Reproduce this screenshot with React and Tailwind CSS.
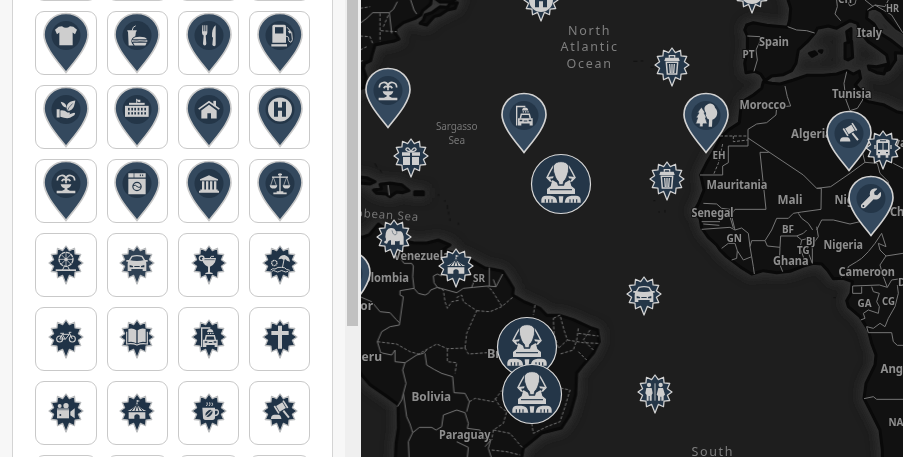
import React from "react";
import { FaWrench } from "react-icons/fa";

const L = "#cecece";
const D = "#243648";

// Glyphs are drawn around (0,0) in third-of-a-pixel units.
const line = (d, w = 4, c = L) => <path d={d} fill="none" stroke={c} strokeWidth={w} />;
const fill = (d, c = L) => <path d={d} fill={c} />;
const box = (x, y, w, h, c = L) => <rect x={x} y={y} width={w} height={h} fill={c} />;

const car = (
  <>
    {line("M-23,-7 L-15,-20 Q0,-24 15,-20 L23,-7", 4)}
    {fill("M-32,-9 H-23 Q0,-3 23,-9 H32 V-4 H27 L28,2 V24 H17 V18 H-17 V24 H-28 V2 L-27,-4 H-32Z")}
    {fill("M-22,6 L-12,9 V13 H-22Z M22,6 L12,9 V13 H22Z M-8,9 H8 V12 H-8Z", D)}
  </>
);

const gavel = (
  <>
    <g transform="translate(3,-12) rotate(-32)">
      {box(-11, -10, 22, 20)}
      {box(-18, -13, 5, 26)}
      {box(13, -13, 5, 26)}
    </g>
    {line("M10,-1 L27,20", 6)}
    {fill("M-27,22 Q-26,11 -17,11 H-5 Q2,11 4,22 V24 H-27Z")}
  </>
);

const ICONS = {
  shirt: fill("M-12,-28 Q0,-18 12,-28 L22,-26 L33,-17 L27,-4 L20,-9 V29 H-20 V-9 L-27,-4 L-33,-17 L-22,-26Z"),
  food: (
    <>
      {line("M-15,-14 L-11,-25 L-4,-29", 3)}
      {fill("M-29,-16 H-1 V-12 H-3 L-5,2 Q-18,7 -17,18 L-15,24 L-10,30 H-25 L-27,-12 H-29Z")}
      {fill("M-13,11 Q-8,4 8,4 Q25,4 30,11Z M-15,14 H31 V19 H-15Z M-12,22 H29 L25,30 H-7Z")}
      {line("M-11,17 L0,16 L8,18 L26,16", 1.6, D)}
    </>
  ),
  cutlery: fill(
    "M-20,-31 h3 v18 h3 v-18 h3 v18 h3 v-18 h3 v23 q0,6 -5,8 l2,24 q0,6 -5,6 q-5,0 -5,-6 l2,-24 q-5,-2 -5,-8z M20,-31 Q8,-22 9,4 L12,7 L10,28 Q11,32 16,32 Q21,31 20,27Z"
  ),
  gas: (
    <>
      {fill("M-23,-27 q0,-5 5,-5 H13 q5,0 5,5 V22 H-23Z")}
      {box(-15, -25, 25, 19, D)}
      {box(-26, 26, 47, 7)}
      {line("M21,-25 L35,-9 L37,12 Q36,21 30,20 Q25,18 26,8 Q25,2 18,2", 3)}
      {line("M26,-14 L32,-7", 6)}
    </>
  ),
  plant: (
    <>
      {fill("M28,-27 Q10,-25 4,-15 Q-1,-7 3,4 Q19,4 24,-10 Q27,-20 28,-27Z M-16,-23 Q2,-20 1,-6 Q-10,-5 -16,-23Z")}
      {line("M20,-18 Q7,-6 3,5", 2, D)}
      {fill("M-28,-1 H-19 V24 H-28Z M-17,3 Q-5,1 4,9 H11 Q14,13 8,15 L24,10 Q30,10 25,17 L12,25 Q0,28 -17,22Z")}
    </>
  ),
  school: (
    <>
      {box(-36, -11, 71, 33)}
      {box(-24, -20, 47, 6)}
      {line("M-1,-20 V-32", 3)}
      {fill("M-2,-32 L2,-29 L10,-29 V-22 L2,-23Z")}
      {[-27, -17, -8, 2, 12, 22].map((x) => (
        <g key={x}>
          {box(x, -5, 5, 8, D)}
          {box(x, 8, 5, 7, D)}
        </g>
      ))}
    </>
  ),
  house: (
    <>
      {line("M-31,-1 L0,-23 L31,-1", 5)}
      {box(13, -26, 8, 16)}
      {fill("M-23,3 L0,-14 L23,3 V27 H6 V11 H-5 V27 H-23Z")}
    </>
  ),
  hospital: (
    <>
      <circle r="36" fill={L} />
      {fill("M-18,-23h12v17h12v-17h12v45h-12v-18h-12v18h-12z", D)}
    </>
  ),
  fountain: (
    <>
      {fill("M-28,22 H28 V29 H-28Z M-16,2 H16 Q14,12 4,14 V18 L12,22 H-12 L-4,18 V14 Q-14,12 -16,2Z")}
      {line("M0,-1 V-22 M0,-14 Q-3,-26 -14,-24 Q-26,-22 -26,-9 M0,-14 Q3,-26 14,-24 Q26,-22 26,-9 M0,-8 Q-6,-17 -13,-7 M0,-8 Q6,-17 13,-7", 5)}
    </>
  ),
  washer: (
    <>
      {fill("M-26,-31 H-10 V-18 H-26Z M-8,-31 H26 V-18 H-8Z M-26,-14 H26 V32 H-26Z")}
      {line("M10,-27 V-22 M17,-27 V-22", 3, D)}
      <circle cy="9" r="12.5" fill="none" stroke={D} strokeWidth="3.5" />
      {line("M-12,6 Q-4,3 0,9 Q5,14 12,10", 3, D)}
    </>
  ),
  bank: fill(
    "M0,-25 L27,-13 V-9 H-27 V-13Z M-21,-7 h7 v25 h-7z M-9,-7 h7 v25 h-7z M3,-7 h7 v25 h-7z M15,-7 h7 v25 h-7z M-26,18 H26 V22 H30 V28 H-30 V22 H-26Z"
  ),
  scales: (
    <>
      {line("M0,-31 V26 M-6,-27 H6", 4)}
      {line("M-24,-19 H24", 4)}
      {line("M-20,-19 L-28,6 M-20,-19 L-11,6 M20,-19 L28,6 M20,-19 L11,6", 2)}
      {fill("M-31,5 h23 q-1,10 -11,10 q-11,0 -12,-10z M31,5 h-23 q1,10 11,10 q11,0 12,-10z M-10,23 H10 V27 H20 V32 H-20 V27 H-10Z")}
    </>
  ),
  ferris: (
    <>
      <circle cy="-11" r="21" fill="none" stroke={L} strokeWidth="4" strokeDasharray="12 2" />
      {line("M0,-32 V10 M-21,-11 H21 M-15,-26 L15,4 M15,-26 L-15,4", 2.4)}
      <circle cy="-11" r="5" fill={L} />
      {line("M-5,10 L-11,22 M5,10 L11,22", 3)}
      {box(-31, 19, 61, 5)}
    </>
  ),
  car,
  cocktail: (
    <>
      {fill("M-21,-15 H21 L18,-2 Q12,9 3,11 V28 L11,30 V33 H-11 V30 L-3,28 V11 Q-12,9 -18,-2Z")}
      {line("M-17,-10 H17", 2, D)}
      {line("M3,-14 L7,-20 H15", 3)}
      <circle cx="-22" cy="-14" r="7" fill="none" stroke={L} strokeWidth="4" />
    </>
  ),
  beach: (
    <>
      <circle cx="-17" cy="0" r="8" fill="none" stroke={L} strokeWidth="4" strokeDasharray="4 1.3" />
      {fill("M-5,-11 Q0,-24 14,-24 Q28,-20 30,-4 L21,-7 L17,-11 L11,-9 L5,-13Z")}
      {line("M12,-10 L7,15", 3)}
      {line("M-28,21 Q-22,15 -15,18 Q-7,11 5,13 Q16,13 19,19 L29,22 M-25,25 q6,-5 12,0 q6,4 12,0 q6,-5 12,0 q6,4 13,0", 3)}
    </>
  ),
  bike: (
    <>
      <circle cx="-19" cy="6" r="9" fill="none" stroke={L} strokeWidth="3.4" />
      <circle cx="19" cy="6" r="9" fill="none" stroke={L} strokeWidth="3.4" />
      {line("M-19,6 L-11,-8 H10 L-2,7 L-11,-8 M-19,6 H-2 M19,6 L9,-14 H16 M-17,-11 H-6", 3)}
    </>
  ),
  book: (
    <>
      {fill("M-2,-20 Q-12,-28 -26,-24 V15 Q-12,12 -2,19Z M2,-20 Q12,-28 26,-24 V15 Q12,12 2,19Z")}
      {line("M-31,-16 V21 Q-13,18 0,24 Q13,18 31,21 V-16", 3.5)}
    </>
  ),
  carwash: (
    <>
      {line("M-22,30 V-27 H4", 4)}
      {fill("M-6,-15 Q-5,-24 3,-24 Q12,-24 13,-15Z M-4,-13 h4 v4 h-4z M3,-13 h4 v4 h-4z M10,-13 h4 v4 h-4z")}
      {line("M-11,9 L-8,-4 H16 L19,9", 4.5)}
      {fill("M-18,8 H26 V30 H17 V24 H-8 V30 H-18Z")}
      {fill("M-13,13 h8 v4 h-8z M14,13 h8 v4 h-8z M-1,15 h11 v3 h-11z", D)}
    </>
  ),
  cross: fill("M-6,-34 H6 V-18 H26 V-6 H6 V35 H-6 V-6 H-26 V-18 H-6Z"),
  camera: (
    <>
      <circle cx="-19" cy="-15" r="6" fill={L} />
      <circle cx="0" cy="-16" r="8" fill={L} />
      {box(-27, -7, 36, 29)}
      {box(-27, -7, 36, 5, "#8d949b")}
      <circle cx="-17" cy="12" r="3" fill={D} />
      {fill("M13,2 L26,-8 V22 L13,13Z")}
    </>
  ),
  tent: (
    <>
      {fill("M-28,0 Q-8,-8 0,-25 Q8,-8 28,0Z M-25,4 H25 V23 H8 V14 Q0,6 -8,14 V23 H-25Z M0,-33 L9,-30 L0,-27Z")}
      {line("M-2,-20 L-17,0 M0,-20 L-6,0 M0,-20 L6,0 M2,-20 L17,0", 3, D)}
      {line("M0,-33 V-22", 2)}
    </>
  ),
  coffee: (
    <>
      {line("M-8,-15 Q-3,-19 -6,-26 M0,-15 Q5,-19 2,-26 M8,-15 Q13,-19 9,-25", 3)}
      {fill("M-20,-10 H18 V19 Q18,27 10,27 H-10 Q-18,27 -18,19Z")}
      {line("M17,-3 H25 Q29,-1 28,6 Q26,13 17,14", 4)}
      <g transform="translate(0,7) rotate(45)">
        <ellipse rx="8" ry="12" fill={D} />
        {line("M0,-12 V12", 3)}
      </g>
    </>
  ),
  gavel,
  trash: (
    <>
      {line("M-8,-22 V-28 H8 V-22", 4)}
      {fill("M-20,-22 H20 L23,-12 H-23Z")}
      {line("M-17,-8 L-14,27 H14 L17,-8Z", 4.5)}
      {line("M-7,-3 L-5,24 M0,-3 V24 M7,-3 L5,24", 4)}
    </>
  ),
  gift: (
    <>
      {fill("M-27,-11 H-3 V-1 H-27Z M3,-11 H27 V-1 H3Z M-24,3 H-3 V27 H-24Z M3,3 H24 V27 H3Z")}
      {line("M0,-12 Q-6,-28 -14,-23 Q-20,-15 0,-12 Q6,-28 14,-23 Q20,-15 0,-12", 4)}
    </>
  ),
  elephant: (
    <>
      {fill("M-26,0 Q-26,-25 -10,-27 Q2,-28 6,-17 H21 Q29,-12 29,-1 V23 H17 V11 Q10,14 3,12 V23 H-9 V10 Q-16,8 -18,14 L-21,20 L-29,18 V13 Q-23,13 -24,6Z")}
      {line("M-6,-20 Q-3,-4 6,-7 Q10,-10 8,-17", 2, "#55626e")}
    </>
  ),
  restroom: (
    <>
      <circle cx="-18" cy="-21" r="6.5" fill={L} />
      <circle cx="17" cy="-21" r="6.5" fill={L} />
      {box(-2, -26, 4, 52, "#8f98a0")}
      {fill("M-26,-12 H-10 L-7,4 L-10,9 V26 H-16 V12 H-19 V26 H-25 V9 L-29,4Z M10,-12 H24 L30,8 L26,12 V26 H19 V14 H16 V26 H9 V12 L5,8Z")}
    </>
  ),
  bus: (
    <>
      {fill("M-20,-22 Q-18,-27 0,-27 Q18,-27 20,-22 V22 H16 V29 H8 V22 H-8 V29 H-16 V22 H-20Z M-26,-9 h4 v12 h-4z M22,-9 h4 v12 h-4z")}
      {fill("M-15,-15 H-1.5 V5 H-15Z M1.5,-15 H15 V5 H1.5Z M-9,-23 H9 V-20 H-9Z M-15,12 h6 v4 h-6z M9,12 h6 v4 h-6z", D)}
    </>
  ),
  tree: (
    <>
      {fill("M13,-36 Q26,-34 27,-23 Q36,-14 33,-2 Q30,9 19,13 L18,34 H8 L9,12 Q4,11 2,7 L-2,-2 L1,-4 L-4,-16 Q-7,-27 3,-32 Q8,-36 13,-36Z")}
      <path
        d="M-14,-25 L-2,-8 H-6 L2,7 H-2 L4,25 H-9 V34 H-19 V25 H-31 L-25,7 H-30 L-21,-8 H-26Z"
        fill={L}
        stroke={D}
        strokeWidth="2"
      />
    </>
  ),
  wrench: (
    <g transform="translate(-30.5,-31)">
      <FaWrench size={61} color={L} />
    </g>
  ),
};

const burst = (() => {
  const pts = [];
  for (let i = 0; i < 24; i++) {
    const r = i === 12 ? 63 : i % 2 ? 38.5 : 51;
    const a = (i * Math.PI) / 12;
    pts.push(`${(Math.sin(a) * r).toFixed(1)},${(-Math.cos(a) * r).toFixed(1)}`);
  }
  return "M" + pts.join("L") + "Z";
})();

const PIN = "M0,-66 C37,-66 66,-38 66,-2 C66,34 24,80 0,111 C-24,80 -66,34 -66,-2 C-66,-38 -37,-66 0,-66Z";

function Pin({ icon, edge = "#d2d2d2", className = "" }) {
  return (
    <svg className={`block h-[62px] w-[48px] shrink-0 ${className}`} viewBox="-72 -70.5 144 186">
      <path d={PIN} fill="#34495e" stroke={edge} strokeWidth="5" />
      <circle r="43.5" fill={D} />
      {ICONS[icon]}
    </svg>
  );
}

function Burst({ icon, edge = "#d2d2d2", body = D, className = "" }) {
  return (
    <svg className={`block h-[42px] w-[38px] shrink-0 ${className}`} viewBox="-57 -57 114 126">
      <path d={burst} fill={body} stroke={edge} strokeWidth="3.8" strokeLinejoin="round" />
      {ICONS[icon]}
    </svg>
  );
}

function Sphinx({ className = "" }) {
  const half = (
    <>
      {line("M-22,-55 Q-30,-44 -42,-19 L-31,-8", 4.5)}
      {fill("M-41,-21 L-22,-23 L-24,-17 L-33,-16 L-26,-5 L-34,-8Z")}
      {fill("M-59,56 V47 Q-58,35 -45,35 H-32 Q-16,36 -13,48 L-11,56Z")}
      {line("M-47,56 V46 M-37,56 V46 M-27,56 V46", 3.5, D)}
    </>
  );
  return (
    <svg className={`block size-[62px] ${className}`} viewBox="-93 -93 186 186">
      <circle r="88.5" fill={D} stroke="#d8d8d8" strokeWidth="3.6" />
      {half}
      <g transform="scale(-1,1)">{half}</g>
      {fill("M-26,-12 L-12,-4 L-9,5 H9 L12,-4 L26,-12 L31,6 L42,15 V30 H-42 V15 L-31,6Z")}
      <path
        d="M0,-67 Q18,-67 23,-54 Q24,-36 17,-21 Q14,-13 8,-8 L6,2 H-6 L-8,-8 Q-14,-13 -17,-21 Q-24,-36 -23,-54 Q-18,-67 0,-67Z"
        fill={L}
        stroke={D}
        strokeWidth="2.5"
      />
      {line("M-33,17 H33", 3.5, D)}
      {fill("M-7,37 H7 L5,56 H-5Z")}
    </svg>
  );
}

const TILES = [
  null, null, null, null,
  "shirt", "food", "cutlery", "gas",
  "plant", "school", "house", "hospital",
  "fountain", "washer", "bank", "scales",
  "ferris", "car", "cocktail", "beach",
  "bike", "book", "carwash", "cross",
  "camera", "tent", "coffee", "gavel",
  null, null, null, null,
];

function Palette() {
  return (
    <aside className="flex h-full w-[361px] shrink-0 bg-[#f7f7f7]">
      <div className="ml-3 flex h-full w-[321px] items-end overflow-hidden border-x border-[#d4d4d4] bg-white pl-[22.3px]">
        <div className="-mb-[62px] grid w-[275.2px] grid-cols-4 gap-[10px]">
          {TILES.map((icon, i) => (
            <button
              key={i}
              className="flex h-16 items-center justify-center rounded-[9px] border border-[#c9c9c9] bg-white"
            >
              {icon && i < 16 && <Pin icon={icon} edge="#c9c9c9" />}
              {icon && i >= 16 && (
                <Burst icon={icon} edge="#b9bbbd" body={icon === "car" ? "#2f4154" : "#203347"} />
              )}
            </button>
          ))}
        </div>
      </div>
      <div className="ml-3 flex h-full w-4 bg-[#efefef] pl-[2px]">
        <div className="h-[326px] w-[11px] bg-[#c1c1c1]" />
      </div>
    </aside>
  );
}

// Coast lines: west half starts at x=360, east half at x=620, three units per pixel.
const WEST = [
  "M-20,-10 H215 L212,12 L188,32 L182,45 L165,55 L130,68 L108,85 L106,100 L117,117 L100,124 L75,128 L45,135 L36,165 L32,182 L14,190 L10,205 L18,230 L12,262 L-20,275Z",
  "M180,70 L190,60 L195,45 L215,38 L240,20 L262,22 L270,10 L292,8 L285,25 L262,30 L240,45 L222,50 L200,75Z",
  "M225,-5 L290,-5 L275,6 L240,6Z",
  "M-10,530 L20,533 L45,545 L30,552 L-10,548Z",
  "M40,570 L64,566 L60,553 L90,549 L125,554 L147,572 L128,578 L110,576 L90,590 L78,582 L50,580Z",
  "M164,575 H190 V584 H164Z",
  "M-20,700 L5,712 L28,704 L55,672 L80,690 L95,705 L120,720 L160,728 L200,729 L235,720 L270,735 L248,750 L300,764 L340,784 L375,804 L400,808 L428,814 L445,840 L460,865 L458,885 L490,904 L520,916 L540,925 L560,946 L600,946 L640,959 L690,982 L713,990 L717,1025 L700,1059 L670,1094 L650,1119 L647,1184 L630,1244 L604,1284 L545,1299 L515,1324 L490,1344 L482,1390 L105,1390 L108,1330 L115,1284 L114,1214 L80,1189 L30,1154 L5,1125 L-20,1090Z",
];
const EAST = [
  "M430,245 L455,250 L480,252 L520,240 L560,226 L610,226 L650,222 L680,212 L700,222 L718,213 L722,235 L706,255 L725,275 L722,295 L745,305 L790,314 L830,335 L880,345 V1400 H788 L787,1350 L780,1290 L755,1240 L732,1195 L738,1150 L765,1095 L768,1065 L755,1030 L745,990 L720,950 L685,920 L680,902 L693,880 L697,845 L670,835 L640,836 L622,810 L605,792 L580,790 L550,798 L510,814 L470,818 L430,812 L395,822 L360,800 L320,770 L300,750 L290,735 L265,712 L245,684 L240,655 L222,635 L236,610 L252,570 L242,525 L262,485 L280,455 L300,415 L325,390 L358,368 L362,330 L375,300 L400,285 L425,265Z",
  "M380,75 L400,68 L440,76 L503,82 L509,60 L512,25 L498,-20 H890 V108 L860,104 L830,85 L800,55 L785,35 L762,22 L742,32 L740,55 L762,72 L778,98 L812,120 L848,148 L846,160 L826,158 L827,180 L808,208 L800,212 L806,192 L800,165 L780,150 L745,125 L722,98 L712,70 L690,62 L665,76 L650,85 L625,78 L592,85 L584,100 L562,125 L535,150 L528,190 L515,212 L490,224 L455,228 L435,242 L422,222 L405,214 L378,218 L374,190 L382,150 L382,108 L374,90Z",
  "M745,198 L770,200 L802,193 L792,222 L770,218 L748,208Z",
  "M675,130 L695,124 L698,172 L684,180 L675,176Z",
  "M680,95 L693,86 L693,118 L684,124Z",
  "M568,160 L584,155 L590,162 L576,169Z M598,153 L606,152 L604,157Z",
];
const W_SOLID = [
  "M20,55 L38,38 H88 L100,28 L112,5 M88,38 L95,100 M152,0 L162,30 L170,42 M0,70 L20,55 M84,555 L88,586",
  "M115,735 L125,780 L132,790 H155 L160,798 L158,830 L162,865 L175,880 L195,885 L205,880 L212,870 L232,862 L222,848 L220,828 L232,822 L245,828",
  "M232,862 L290,878 L310,865 L340,862 L382,858 L408,860 L428,822 M388,803 L388,858 M408,860 L400,838 M335,862 L345,836",
  "M162,865 L120,872 V885 L130,890 L118,975 L90,980 L65,995 L52,1025 L62,1058 L95,1065 L105,1050 V1085 L135,1088 L170,1065 L190,1060 L200,1050",
  "M0,890 L35,905 L60,935 L90,938 L108,958 L118,968 M135,1088 L128,1110 L138,1150 L130,1180 L125,1200 L112,1220 M130,1180 L140,1250 L150,1272 L158,1298 L178,1282 L215,1282 L228,1290 L245,1280 L250,1245 L290,1230 L315,1238 L325,1270 L322,1285 L360,1290 L365,1312 L392,1320 L385,1345 L400,1390",
  "M195,1060 L200,1095 L222,1108 L245,1120 L278,1130 L282,1178 L315,1180 L328,1205 L320,1235 M158,1298 L145,1325 L148,1390 M290,1325 L325,1342 L320,1390 M392,1320 L375,1340",
];
const W_DASH = [
  "M0,25 L30,20 M0,108 L30,110 L38,130 M60,40 V125 M62,92 L110,95 M70,80 L85,45 M0,150 L20,140 M0,185 L12,180",
  "M52,1025 L110,1032 L150,1055 L175,1062 L230,1032 L262,1046 L315,1044 L325,1062 L380,1058 L420,1060",
  "M315,1044 L320,1000 L350,932 L310,905 L305,885 L285,895 M350,932 L390,935 L425,920 L460,890 M425,918 L395,870 L382,860",
  "M232,862 L250,870 L255,905 L262,925 L275,905 L300,900 M262,1046 V1085 L290,1088 L285,1120 M525,915 L520,945 M580,955 L600,945 L612,990 L622,1020 L595,1045 L582,1000Z M622,1020 L670,1028 L715,1030 M655,985 L650,1020 L640,1050 L600,1062 M690,990 L670,1020 L700,1050 M655,1000 L715,1008 M655,1055 L680,1080",
  "M328,1205 L345,1195 L400,1205 L430,1165 M405,1195 L420,1220 L440,1235 L430,1270 L400,1290 L395,1320 M400,1290 L450,1300 L480,1335 L490,1345 M515,1270 L520,1300 L560,1280 L600,1265 L615,1220 L630,1170 L605,1165 M395,1350 L440,1355 L480,1365",
];
const E_SOLID = [
  "M382,108 L420,110 L418,128 L408,150 L412,180 L402,214 M503,80 L530,90 L560,92 L584,99 M650,0 L652,20 L645,42 L662,62 M680,0 L690,18 L705,12 L708,0 M742,30 L765,15 L795,20 L805,0 M765,15 L790,30 L815,45 L848,98 M735,0 L760,20",
  "M495,258 L502,290 L512,318 L470,322 L468,345 L440,368 L410,372 L384,388 V438 H325 V488 L308,498 V525 H240 M384,414 L550,525 L590,565 L632,560 L690,520 L735,487 L700,350 M680,215 L672,250 L678,300 L690,332 L712,325 L728,300 L724,285",
  "M735,487 L772,490 L780,520 L805,545 L800,600 M820,490 L849,505 M446,457 H420 L438,628 H345 L330,650 L340,684 M590,565 H604 L603,628 L545,636 L520,640 L505,655 L470,655 L455,690 M535,640 L545,655 L565,670 L578,690 M590,690 L605,660 L640,660 L690,672 L720,665",
  "M250,610 L290,612 L305,625 L330,628 L345,690 M245,665 L300,665 M250,672 L298,676 M245,688 L330,682 L345,690 L365,684 L385,700 L390,740 L395,770 L370,780 L352,752 L345,730 L325,730 L305,745 M352,752 L350,775 L335,780 M395,770 L400,800 L403,822",
  "M390,740 L395,722 L435,722 L455,690 M435,722 L442,738 L480,742 L482,708 L530,708 L545,720 L540,745 L552,775 L562,790 M480,742 L478,790 L488,815 M530,708 L550,700 L560,690 M545,720 L565,715 L562,750 L577,790 L577,735 L595,710 L590,680",
  "M785,700 L765,730 L745,755 L725,775 L710,785 L685,800 L682,815 L665,832 M785,700 L798,740 L775,730 L780,750 L798,768 L780,795 L790,830 L802,862 L778,855 L698,858 V880 H725 L725,860 M798,768 L849,760 M802,862 L815,840 L849,835",
  "M755,860 L760,875 L778,880 L770,905 L778,920 L775,940 L745,930 L730,940 L735,955 L722,960 M832,855 L835,880 L825,920 L805,955 L795,980 L780,970 L760,985 L740,980 L745,998 H815 L820,1025 L832,1036 H849 M732,1196 L760,1190 L770,1198 H849",
];
const E_DASH = [
  "M300,408 H384 M340,408 V425 L384,420 M308,432 L295,490 L280,525",
];

const LABELS = [
  ["Spain", 759, 46, 30], ["PT", 742.5, 58, 12, 10], ["Italy", 857, 37, 25], ["HR", 886, 11.5, 13, 10], ["CH", 838, 2.5, 14, 10],
  ["Morocco", 739.5, 109, 46.5], ["Tunisia", 832, 97.5, 39.5], ["Algeria", 791, 137.5, 41], ["Libya", 876, 147, 31],
  ["EH", 712.5, 159, 13, 10], ["Mauritania", 706.5, 189, 61], ["Mali", 777.5, 204, 25], ["Senegal", 691.5, 216.5, 42],
  ["Niger", 834.5, 203.5, 31], ["Chad", 890, 215.5, 28], ["BF", 782, 232.5, 12, 10], ["GN", 726.5, 241.5, 15.5, 10],
  ["BJ", 806, 245, 9.5, 10], ["TG", 797, 254, 12.5, 10], ["Ghana", 773, 264.5, 35.5], ["Nigeria", 823.5, 249, 39.5],
  ["Cameroon", 838.5, 276, 56.5], ["GA", 857.5, 306.5, 14, 10], ["CG", 882, 305, 13, 10], ["DRC", 898, 286, 22, 10],
  ["Angola", 880.5, 372.5, 40], ["NA", 888.5, 426, 15, 10], ["Venezuela", 393.5, 260, 56], ["SR", 473, 282, 12, 10],
  ["Colombia", 356.5, 281.5, 52.5], ["Ecuador", 325, 310, 48], ["Peru", 354, 361, 28], ["Bolivia", 411.5, 401, 39.5],
  ["Brazil", 487, 358, 35], ["Paraguay", 439, 439, 51.5],
];

const FONT = "font-['Noto_Sans','Open_Sans',sans-serif]";

function each(list, props) {
  return list.map((d, i) => <path key={i} d={d} {...props} />);
}

function BaseMap() {
  const west = "translate(360,0) scale(0.33333)";
  const east = "translate(620,0) scale(0.33333)";
  const glow = { fill: "#343434", stroke: "#343434", strokeWidth: 22 };
  const land = { fill: "#111111", stroke: "#090909", strokeWidth: 9, strokeLinejoin: "round" };
  const solid = { fill: "none", stroke: "#767676", strokeWidth: 3, strokeLinejoin: "round" };
  const dash = { ...solid, stroke: "#737373", strokeDasharray: "9 5" };
  return (
    <svg className={`block h-full w-full ${FONT}`} viewBox="361 0 542 457" preserveAspectRatio="xMinYMin slice">
      <defs>
        <filter id="soft" x="-10%" y="-10%" width="120%" height="120%">
          <feGaussianBlur stdDeviation="5.5" />
        </filter>
      </defs>
      <rect x="361" width="542" height="457" fill="#1e1e1e" />
      <g filter="url(#soft)">
        <g transform={west}>{each(WEST, glow)}</g>
        <g transform={east}>{each(EAST, glow)}</g>
      </g>
      <g transform={west}>
        {each(WEST, land)}
        {each(W_SOLID, solid)}
        {each(W_DASH, dash)}
        {line("M236,582 v5 M255,600 v5 M262,615 v12 M266,635 v8 M270,655 v8 M295,668 v6 M45,490 l6,12 M60,510 l5,8", 3, "#111111")}
      </g>
      <g transform={east}>
        {each(EAST, land)}
        {each(E_SOLID, solid)}
        {each(E_DASH, dash)}
        {line("M40,184 h12 M62,183 h8 M92,202 h9 M100,602 h6 M115,636 h5 M135,630 v8 M640,893 h8", 3, "#111111")}
      </g>
      <g fill="#8e8e8e" stroke="#111111" strokeWidth="2" paintOrder="stroke" fontWeight="700">
        {LABELS.map(([t, x, y, w, s = 12]) => (
          <text key={t} x={x} y={y} fontSize={s} textLength={w} lengthAdjust="spacingAndGlyphs">
            {t}
          </text>
        ))}
      </g>
      <g fill="#7e7e7e" fontSize="12.5">
        <text x="568" y="34.5" textLength="41.5">North</text>
        <text x="560.5" y="51" textLength="56.5">Atlantic</text>
        <text x="566.5" y="67.5" textLength="44.5">Ocean</text>
        <text x="691.5" y="456" textLength="41">South</text>
      </g>
      <g fill="#757575" fontSize="10">
        <text x="436" y="129.5" textLength="41.5">Sargasso</text>
        <text x="448.5" y="143.5" textLength="16.5">Sea</text>
        <text transform="rotate(4 418 221)" x="331" y="221" fontSize="11.5" textLength="87">
          Caribbean Sea
        </text>
      </g>
    </svg>
  );
}

function MapView() {
  return (
    <main className="relative h-full flex-1 overflow-hidden bg-[#1e1e1e]">
      <BaseMap />
      <Burst icon="hospital" className="absolute -top-[19.5px] left-[161px]" />
      <Burst icon="hospital" className="absolute -top-[27.5px] left-[372px]" />
      <Burst icon="trash" className="absolute left-[292px] top-[46px]" />
      <Pin icon="fountain" className="absolute left-[3px] top-[67px]" />
      <Pin icon="carwash" className="absolute left-[139px] top-[92px]" />
      <Pin icon="tree" className="absolute left-[321px] top-[92px]" />
      <Burst icon="gift" className="absolute left-[31px] top-[137px]" />
      <Burst icon="trash" className="absolute left-[287px] top-[160px]" />
      <Pin icon="gavel" className="absolute left-[464px] top-[110px]" />
      <Burst icon="bus" className="absolute left-[503px] top-[129px]" />
      <Pin icon="wrench" className="absolute left-[486px] top-[175px]" />
      <Burst icon="elephant" className="absolute left-[14px] top-[218px]" />
      <Burst icon="tent" className="absolute left-[76px] top-[247px]" />
      <Pin icon="house" className="absolute -left-[37px] top-[250px]" />
      <Burst icon="car" className="absolute left-[264px] top-[275px]" />
      <Burst icon="restroom" className="absolute left-[275px] top-[373px]" />
      <Sphinx className="absolute left-[169px] top-[153px]" />
      <Sphinx className="absolute left-[135px] top-[316px]" />
      <Sphinx className="absolute left-[140px] top-[363px]" />
    </main>
  );
}

export default function App() {
  return (
    <div className="flex h-screen w-full overflow-hidden bg-white">
      <Palette />
      <MapView />
    </div>
  );
}
